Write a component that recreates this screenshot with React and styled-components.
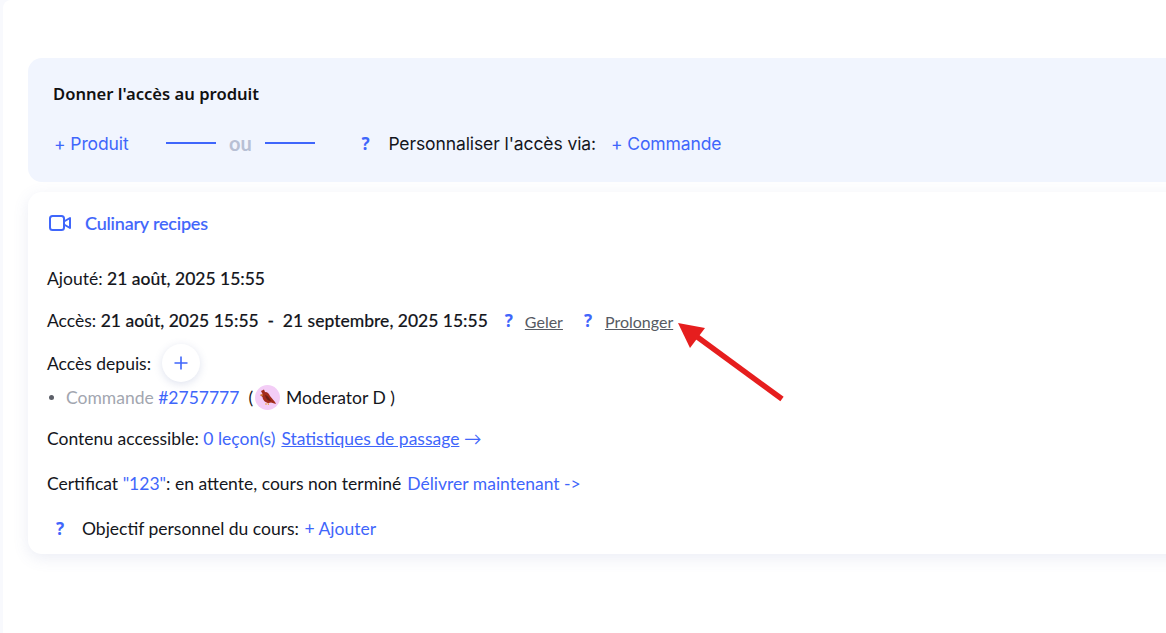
import React from 'react';
import styled, { createGlobalStyle } from 'styled-components';

const GlobalStyle = createGlobalStyle`
  html, body {
    margin: 0;
    padding: 0;
    height: 100%;
    overflow: hidden;
    background: #f8f9fd;
  }
  #root {
    height: 100%;
  }
`;

const blue = '#3f66fb';

const Page = styled.div`
  box-sizing: border-box;
  height: 633px;
  width: 1300px;
  margin-left: 3px;
  padding: 58px 0 0 25px;
  background: #fff;
  border-radius: 8px 0 0 0;
  font-family: Lato, sans-serif;
  font-size: 17.5px;
  color: #14161c;
`;

const AccessPanel = styled.section`
  box-sizing: border-box;
  height: 124px;
  padding: 26px 26px 0;
  background: #f1f5fe;
  border-radius: 14px;
`;

const PanelTitle = styled.h2`
  margin: 0 0 0 -1px;
  font-family: 'Noto Sans', sans-serif;
  font-size: 16.6px;
  line-height: 20px;
  font-weight: 600;
  color: #111;
`;

const ActionRow = styled.div`
  display: flex;
  align-items: center;
  height: 24px;
  margin-top: 27px;
  font-family: Inter, sans-serif;
  font-size: 17.5px;
  letter-spacing: -0.1px;
`;

const ActionLink = styled.a`
  color: ${blue};
  cursor: pointer;
`;

const Divider = styled.div`
  display: flex;
  align-items: center;
  gap: 13.5px;
  margin: 0 46px 0 37px;
  font-family: Lato, sans-serif;
  font-weight: 700;
  font-size: 20px;
  letter-spacing: 0;
  color: #b8c0d4;
  &::before,
  &::after {
    content: '';
    width: 50px;
    height: 2px;
    background: ${blue};
  }
`;

const Hint = styled.span`
  flex: none;
  box-sizing: border-box;
  width: ${(p) => p.$w || 27}px;
  margin-left: ${(p) => p.$left || 0}px;
  padding-left: ${(p) => p.$pad || 0}px;
  font-family: 'Noto Sans', sans-serif;
  font-weight: 700;
  font-size: 17px;
  color: ${blue};
`;

const PlainText = styled.span`
  margin-right: ${(p) => p.$gap || 0}px;
  color: #14161c;
`;

const Card = styled.section`
  box-sizing: border-box;
  height: 362px;
  margin-top: 10px;
  padding: 19px 19px 0;
  background: #fff;
  border-radius: 14px;
  box-shadow: 0 4px 16px rgba(90, 110, 170, 0.12);
`;

const CourseTitle = styled.div`
  display: flex;
  align-items: center;
  gap: 14px;
  height: 24px;
  padding-left: 2px;
  font-weight: 500;
  font-size: 18px;
  letter-spacing: -0.2px;
  -webkit-text-stroke: 0.15px ${blue};
  color: ${blue};
`;

const Line = styled.div`
  display: flex;
  align-items: center;
  height: 24px;
  margin-top: ${(p) => p.$top}px;
  white-space: pre;
`;

const Strong = styled.b`
  font-weight: 500;
  -webkit-text-stroke: 0.15px #14161c;
  color: #14161c;
`;

const Muted = styled.a`
  padding-top: 2px;
  font-size: 16px;
  color: #565a63;
  text-decoration: underline;
  cursor: pointer;
`;

const PlusButton = styled.button`
  display: flex;
  align-items: center;
  justify-content: center;
  width: 38px;
  height: 38px;
  margin-left: 11px;
  padding: 0;
  border: none;
  border-radius: 50%;
  background: #fff;
  box-shadow: 0 2px 8px rgba(90, 110, 170, 0.2);
  color: ${blue};
`;

const Bullet = styled.span`
  width: 5px;
  height: 5px;
  margin: 0 12px 0 2px;
  border-radius: 50%;
  background: #5c5f68;
`;

const Grey = styled.span`
  color: #a2a6b0;
`;

const Blue = styled.a`
  margin-left: ${(p) => p.$left || 0}px;
  color: ${blue};
  text-decoration: ${(p) => (p.$underline ? 'underline' : 'none')};
  cursor: pointer;
`;

const Avatar = styled.span`
  display: flex;
  align-items: center;
  justify-content: center;
  width: 25px;
  height: 25px;
  margin: 0 6px 0 2px;
  border-radius: 50%;
  background: #f3cdf6;
`;

const ArrowMark = styled.svg`
  position: absolute;
  left: 670px;
  top: 315px;
  pointer-events: none;
`;

function VideoIcon() {
  return (
    <svg width="22" height="16" viewBox="0 0 22 16" fill="none" stroke={blue} strokeWidth="2" strokeLinejoin="round">
      <rect x="1" y="1" width="14" height="14" rx="2.5" />
      <path d="M15 6.5 L21 3 V13 L15 9.5" />
    </svg>
  );
}

function Bird() {
  return (
    <svg width="19" height="17" viewBox="0 0 19 17">
      <path d="M3 2 L6 0.5 L7 3 C10 3 11 5 12 7 L17 13 L18 15 L13 13.5 C10 15 5 13 4.5 8 L2 6 L4.5 5 Z" fill="#a32c1b" />
      <path d="M7 6 C9 6 11 8 13 12 C10 12 8 10 7 6 Z" fill="#6e2015" />
      <path d="M2 6 L4.5 5 L4.5 7 Z" fill="#e8a23c" />
      <path d="M8 14 L8 16 M10 14 L10.5 16" stroke="#e8a23c" strokeWidth="1" />
    </svg>
  );
}

export default function App() {
  return (
    <>
      <GlobalStyle />
      <Page>
        <AccessPanel>
          <PanelTitle>Donner l'accès au produit</PanelTitle>
          <ActionRow>
            <ActionLink>+ Produit</ActionLink>
            <Divider>ou</Divider>
            <Hint>?</Hint>
            <PlainText $gap={15}>Personnaliser l'accès via:</PlainText>
            <ActionLink>+ Commande</ActionLink>
          </ActionRow>
        </AccessPanel>
        <Card>
          <CourseTitle>
            <VideoIcon />
            Culinary recipes
          </CourseTitle>
          <Line $top={31}>
            Ajouté: <Strong>21 août, 2025 15:55</Strong>
          </Line>
          <Line $top={18}>
            Accès: <Strong>21 août, 2025 15:55  -  21 septembre, 2025 15:55</Strong>
            <Hint $w={20} $left={17}>?</Hint>
            <Muted>Geler</Muted>
            <Hint $w={21} $left={21}>?</Hint>
            <Muted>Prolonger</Muted>
          </Line>
          <Line $top={19}>
            Accès depuis:
            <PlusButton aria-label="Ajouter">
              <svg width="14" height="14" viewBox="0 0 14 14" stroke="currentColor" strokeWidth="1.6">
                <path d="M7 0.5 V13.5 M0.5 7 H13.5" />
              </svg>
            </PlusButton>
          </Line>
          <Line $top={10}>
            <Bullet />
            <Grey>Commande </Grey>
            <Blue>#2757777</Blue>
            {'  ('}
            <Avatar><Bird /></Avatar>
            Moderator D )
          </Line>
          <Line $top={17}>
            Contenu accessible: <Blue>0 leçon(s)</Blue>
            <Blue $left={6} $underline>Statistiques de passage</Blue>
            <Blue>{' →'}</Blue>
          </Line>
          <Line $top={21}>
            Certificat <Blue>"123"</Blue>: en attente, cours non terminé
            <Blue $left={6}>Délivrer maintenant -&gt;</Blue>
          </Line>
          <Line $top={21}>
            <Hint $w={35} $pad={9}>?</Hint>
            Objectif personnel du cours: <Blue $left={1}>+ Ajouter</Blue>
          </Line>
        </Card>
        <ArrowMark width="120" height="95" viewBox="0 0 120 95">
          <path d="M112 84 L26 21" stroke="#e61e1e" strokeWidth="5.5" />
          <path d="M8 8 L35 13 L20 33 Z" fill="#e61e1e" />
        </ArrowMark>
      </Page>
    </>
  );
}
